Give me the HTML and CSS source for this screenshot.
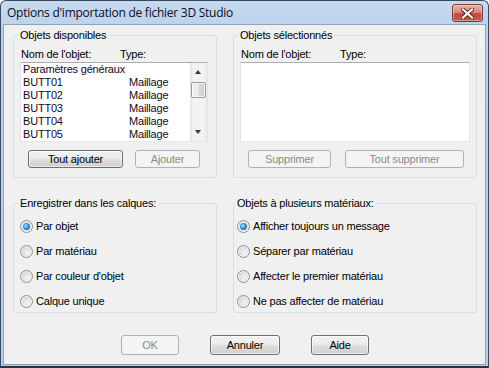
FILE: index.html
```html
<!DOCTYPE html>
<html lang="fr">
<head>
<meta charset="utf-8">
<title>Options d'importation de fichier 3D Studio</title>
<link rel="stylesheet" href="styles.css">
</head>
<body>
<div class="window">
  <div class="titlebar">
    <span class="title">Options d'importation de fichier 3D Studio</span>
    <span class="close">
      <svg width="13" height="11" viewBox="0 0 13 11"><path d="M2 1.5 L11 9.5 M11 1.5 L2 9.5" stroke="#5a2020" stroke-width="4" stroke-linecap="square"/><path d="M2 1.5 L11 9.5 M11 1.5 L2 9.5" stroke="#ffffff" stroke-width="2.2" stroke-linecap="square"/></svg>
    </span>
  </div>
  <div class="client">
    <div class="groups">
      <fieldset class="group g-left">
        <legend>Objets disponibles</legend>
        <div class="list-head"><span class="c-name">Nom de l'objet:</span><span>Type:</span></div>
        <div class="listbox lb-left">
          <div class="items">
            <div class="item">Paramètres généraux</div>
            <div class="item"><span class="c-name">BUTT01</span><span>Maillage</span></div>
            <div class="item"><span class="c-name">BUTT02</span><span>Maillage</span></div>
            <div class="item"><span class="c-name">BUTT03</span><span>Maillage</span></div>
            <div class="item"><span class="c-name">BUTT04</span><span>Maillage</span></div>
            <div class="item"><span class="c-name">BUTT05</span><span>Maillage</span></div>
          </div>
          <div class="scrollbar">
            <div class="arrow up"></div>
            <div class="track"><div class="thumb"></div></div>
            <div class="arrow down"></div>
          </div>
        </div>
        <div class="btns btns-left">
          <span class="btn w-toutaj">Tout ajouter</span>
          <span class="btn disabled w-aj">Ajouter</span>
        </div>
      </fieldset>
      <fieldset class="group g-right">
        <legend>Objets sélectionnés</legend>
        <div class="list-head"><span class="c-name">Nom de l'objet:</span><span>Type:</span></div>
        <div class="listbox lb-right"></div>
        <div class="btns btns-right">
          <span class="btn disabled w-sup">Supprimer</span>
          <span class="btn disabled w-toutsup">Tout supprimer</span>
        </div>
      </fieldset>
      <fieldset class="group g-left radios">
        <legend>Enregistrer dans les calques:</legend>
        <div class="radio checked"><span class="dot"></span>Par objet</div>
        <div class="radio"><span class="dot"></span>Par matériau</div>
        <div class="radio"><span class="dot"></span>Par couleur d'objet</div>
        <div class="radio"><span class="dot"></span>Calque unique</div>
      </fieldset>
      <fieldset class="group g-right radios r-right">
        <legend>Objets à plusieurs matériaux:</legend>
        <div class="radio checked"><span class="dot"></span>Afficher toujours un message</div>
        <div class="radio"><span class="dot"></span>Séparer par matériau</div>
        <div class="radio"><span class="dot"></span>Affecter le premier matériau</div>
        <div class="radio"><span class="dot"></span>Ne pas affecter de matériau</div>
      </fieldset>
    </div>
    <div class="footer">
      <span class="btn disabled w-ok">OK</span>
      <span class="btn w-ann">Annuler</span>
      <span class="btn w-aide">Aide</span>
    </div>
  </div>
</div>
</body>
</html>
```
FILE: styles.css
```css
html, body {
  margin: 0;
  padding: 0;
  background: #ffffff;
}
body {
  width: 489px;
  height: 368px;
  overflow: hidden;
  font-family: "Liberation Sans", Arial, sans-serif;
  font-size: 11px;
  letter-spacing: -0.2px;
  color: #000;
}
.window {
  box-sizing: border-box;
  width: 489px;
  height: 368px;
  display: flex;
  flex-direction: column;
  border: 1px solid #3b4a5c;
  border-bottom: 2px solid #2a3440;
  border-radius: 6px 6px 0 0;
  background: linear-gradient(#c6d9ef 0px, #bdd3ec 24px, #b5cfea 100%);
  padding: 0 2px 1px 2px;
}
.titlebar {
  height: 23px;
  display: flex;
  align-items: flex-start;
  justify-content: space-between;
}
.title {
  font-family: "Open Sans", "Noto Sans", sans-serif;
  font-size: 12px;
  letter-spacing: -0.25px;
  line-height: 16px;
  margin: 4px 0 0 4px;
  color: #0c0c18;
}
.close {
  box-sizing: border-box;
  width: 31px;
  height: 18px;
  margin: 3px 3px 0 0;
  border: 1px solid #7a3a3a;
  border-radius: 3px;
  background: linear-gradient(#e8b0a8 0%, #d98a80 45%, #c4493c 55%, #c75c4e 100%);
  box-shadow: inset 0 0 0 1px rgba(255,255,255,0.35);
  display: flex;
  align-items: center;
  justify-content: center;
}
.client {
  flex: 1;
  background: #f0f0f0;
  border: 1px solid #8fa3ba;
  display: flex;
  flex-direction: column;
}
.groups {
  display: grid;
  grid-template-columns: 204px 244px;
  column-gap: 16px;
  row-gap: 18px;
  padding: 3px 8px 0 9px;
}
.group {
  box-sizing: border-box;
  margin: 0;
  min-width: 0;
  border: 1px solid #d5dfe5;
  border-radius: 3px;
  padding: 6px 7px 9px 6px;
}
.g-right {
  padding-right: 6px;
}
.group legend {
  padding: 0 2px;
  margin-left: -2px;
  line-height: 14px;
  color: #000;
}
.list-head {
  display: flex;
  line-height: 13px;
  height: 13px;
}
.list-head .c-name {
  width: 100px;
  flex: none;
  padding-left: 1px;
  box-sizing: border-box;
}
.listbox {
  box-sizing: border-box;
  height: 80px;
  margin-top: 1px;
  background: #fff;
  border: 1px solid #e2e3ea;
  border-top-color: #abadb3;
  border-bottom-color: #e3e9ef;
  display: flex;
}
.lb-left { width: 188px; }
.lb-right { width: 230px; }
.items {
  flex: 1;
  padding-left: 2px;
}
.item {
  display: flex;
  height: 13px;
  line-height: 13px;
  white-space: nowrap;
  color: #140818;
}
.item .c-name {
  width: 106px;
  flex: none;
}
.scrollbar {
  width: 17px;
  display: flex;
  flex-direction: column;
  background: linear-gradient(90deg, #e3e3e3, #f2f2f2 20%, #f2f2f2 80%, #e8e8e8);
}
.arrow {
  height: 17px;
  position: relative;
}
.arrow::after {
  content: "";
  position: absolute;
  left: 5px;
  width: 0;
  height: 0;
  border-left: 3.5px solid transparent;
  border-right: 3.5px solid transparent;
}
.arrow.up::after {
  top: 7px;
  border-bottom: 4px solid #3a3a3a;
}
.arrow.down::after {
  top: 6px;
  border-top: 4px solid #3a3a3a;
}
.track {
  flex: 1;
  padding-top: 2px;
}
.thumb {
  box-sizing: border-box;
  width: 15px;
  height: 16px;
  margin-left: 1px;
  border: 1px solid #9a9a9a;
  border-radius: 2px;
  background: linear-gradient(90deg, #f4f4f4 0%, #e8e8e8 50%, #d8d8d8 51%, #cfcfcf 100%);
  box-shadow: inset 0 0 0 1px rgba(255,255,255,0.7);
}
.btns {
  display: flex;
  margin-top: 8px;
  padding-left: 8px;
}
.btns-left { gap: 12px; }
.btns-right { gap: 14px; }
.btn {
  box-sizing: border-box;
  height: 18px;
  display: flex;
  align-items: center;
  justify-content: center;
  border: 1px solid #707070;
  border-radius: 3px;
  background: linear-gradient(#f2f2f2 0%, #ebebeb 45%, #dddddd 55%, #cfcfcf 100%);
  box-shadow: inset 0 0 0 1px rgba(255,255,255,0.6);
  color: #000;
  line-height: 13px;
}
.btn.disabled {
  border-color: #adb2b5;
  background: #f4f4f4;
  box-shadow: none;
  color: #8b8b8b;
}
.w-toutaj { width: 95px; }
.w-aj { width: 65px; }
.w-sup { width: 83px; }
.w-toutsup { width: 119px; }
.radios {
  padding-top: 10px;
  padding-bottom: 4px;
}
.r-right {
  padding-left: 3px;
}
.radio {
  display: flex;
  align-items: center;
  height: 13px;
  line-height: 13px;
  white-space: nowrap;
}
.radio + .radio {
  margin-top: 12px;
}
.dot {
  box-sizing: border-box;
  width: 13px;
  height: 13px;
  flex: none;
  margin-right: 3px;
  border-radius: 50%;
  border: 1px solid #8e8f8f;
  background: radial-gradient(circle at 60% 60%, #f6f6f6 0%, #e0e0e0 45%, #c8c8c8 100%);
  box-shadow: inset 0 0 0 1px #f4f4f4;
  position: relative;
}
.radio.checked .dot::after {
  content: "";
  position: absolute;
  left: 2px;
  top: 2px;
  width: 7px;
  height: 7px;
  border-radius: 50%;
  background: radial-gradient(circle at 40% 40%, #b6e0ff 0%, #3c8fd0 45%, #14508a 100%);
}
.footer {
  display: flex;
  justify-content: center;
  gap: 31px;
  margin-top: 22px;
  padding-left: 1px;
}
.footer .btn {
  height: 20px;
}
.w-ok { width: 58px; }
.w-ann { width: 70px; }
.w-aide { width: 58px; }
```
